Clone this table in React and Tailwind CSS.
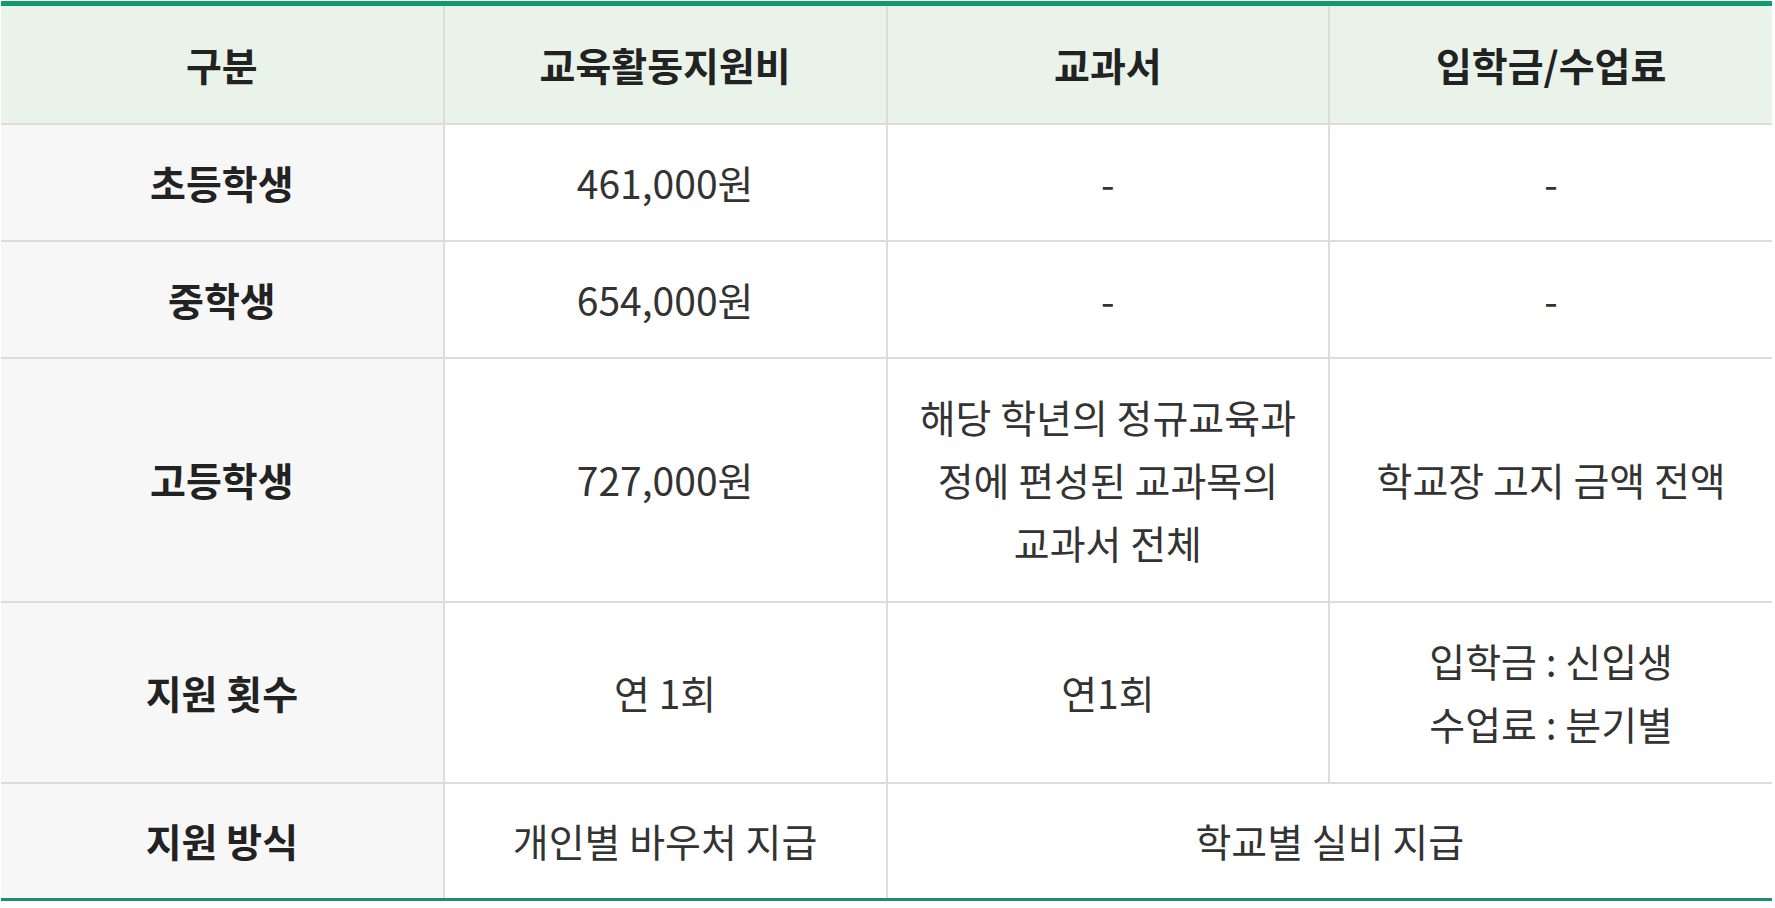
import React from "react";

const rows = [
    { label: "초등학생", cells: ["461,000원", "-", "-"], h: "h-[117px]" },
    { label: "중학생", cells: ["654,000원", "-", "-"], h: "h-[117px]" },
    {
        label: "고등학생",
        cells: ["727,000원", ["해당 학년의 정규교육과", "정에 편성된 교과목의", "교과서 전체"], "학교장 고지 금액 전액"],
        h: "h-[244px]",
    },
    {
        label: "지원 횟수",
        cells: ["연 1회", "연1회", ["입학금 : 신입생", "수업료 : 분기별"]],
        h: "h-[181px]",
    },
];

const thClass = "border-x-2 border-b-2 border-[#dcdcdc] bg-[#e9f3ea] font-bold text-[#222] first:border-l-0 last:border-r-0";
const labelClass = "border-2 border-l-0 border-[#dcdcdc] bg-[#f7f7f7] font-bold text-[#222]";
const cellClass = "border-2 border-[#dcdcdc] bg-white px-[30px] text-[#333] last:border-r-0";

const App = () => {
    return (
        <div className="w-full bg-white pt-[1px] pl-[1px] pr-[3px]" style={{ fontFamily: '"Noto Sans CJK KR", "Noto Sans", sans-serif' }}>
            <table className="w-full table-fixed border-collapse border-t-[5px] border-b-[3px] border-t-[#129b6a] border-b-[#1f8b71] text-center text-[39px] leading-[63px]">
                <thead>
                    <tr className="h-[120px]">
                        <th className={thClass}>구분</th>
                        <th className={thClass}>교육활동지원비</th>
                        <th className={thClass}>교과서</th>
                        <th className={thClass}>입학금/수업료</th>
                    </tr>
                </thead>
                <tbody>
                    {rows.map((row) => (
                        <tr key={row.label} className={row.h}>
                            <th className={labelClass}>{row.label}</th>
                            {row.cells.map((c, i) => (
                                <td key={i} className={cellClass}>
                                    {/* 여러 줄 셀은 원본과 같은 위치에서 줄바꿈 */}
                                    {Array.isArray(c)
                                        ? c.map((line) => <div key={line}>{line}</div>)
                                        : c}
                                </td>
                            ))}
                        </tr>
                    ))}
                    <tr className="h-[117px]">
                        <th className="border-t-2 border-r-2 border-[#dcdcdc] bg-[#f7f7f7] font-bold text-[#222]">지원 방식</th>
                        <td className="border-t-2 border-r-2 border-[#dcdcdc] text-[#333]">개인별 바우처 지급</td>
                        <td colSpan={2} className="border-t-2 border-[#dcdcdc] text-[#333]">학교별 실비 지급</td>
                    </tr>
                </tbody>
            </table>
        </div>
    );
};

export default App;
